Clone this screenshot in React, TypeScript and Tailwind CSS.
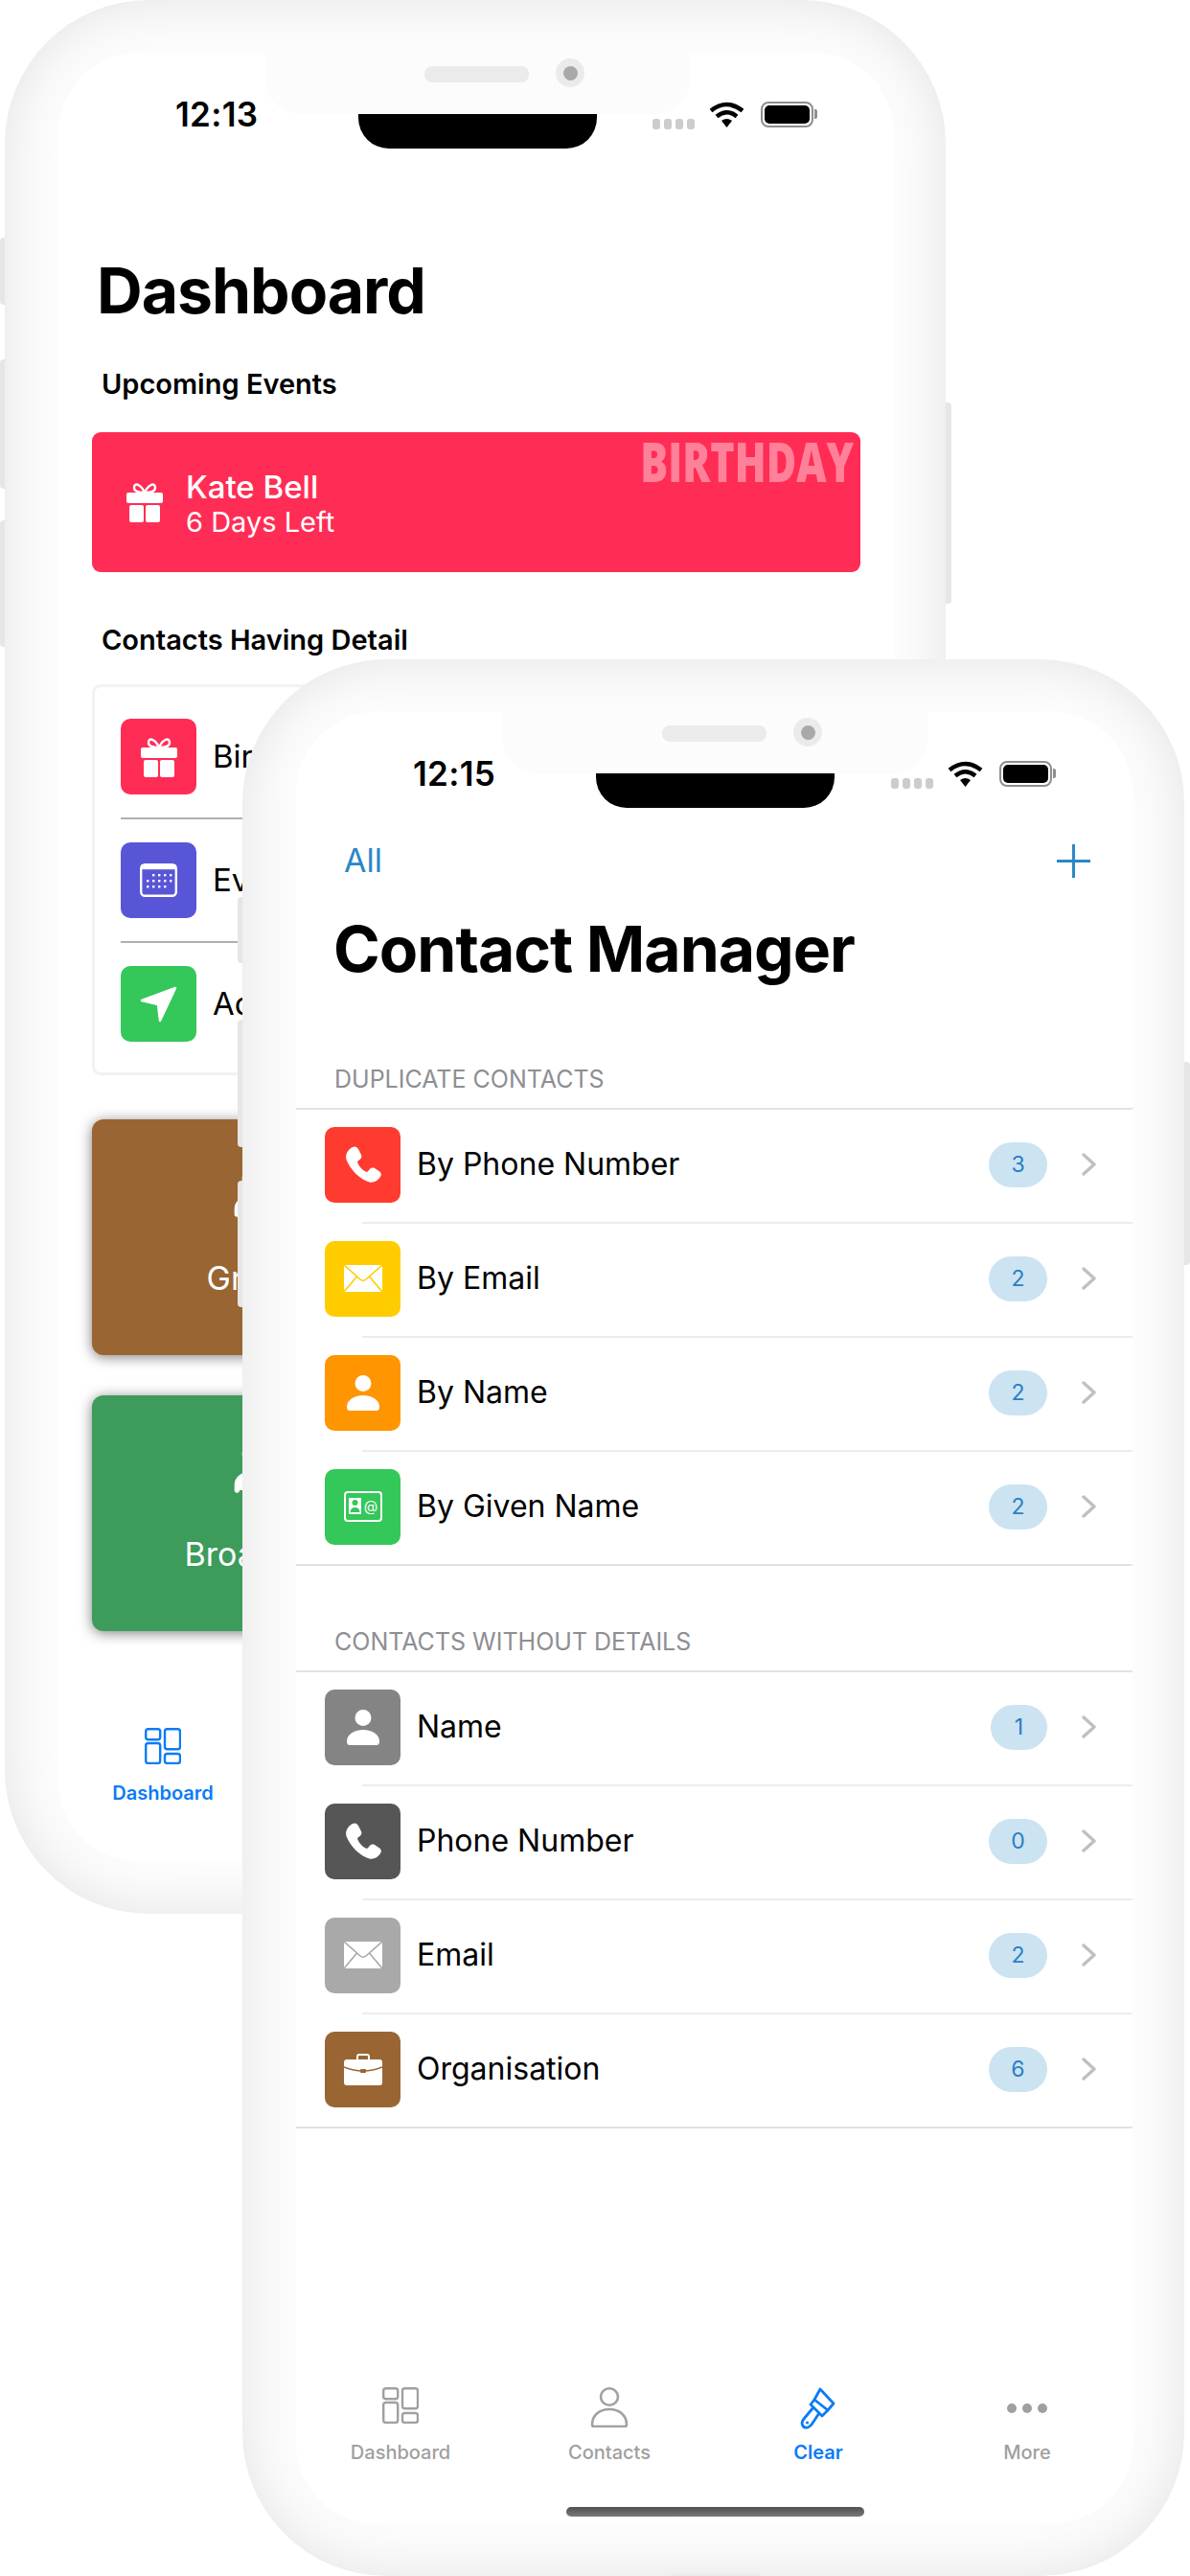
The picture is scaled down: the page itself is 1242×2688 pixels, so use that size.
import { ReactNode } from "react";
import { Users } from "lucide-react";

const PhoneGlyph = () => (
  <svg width="38" height="38" viewBox="0 0 38 38" fill="white">
    <path d="M8 1 C11 -0.5 13 1 14.5 4 L17 9 C18 11.5 17 13 15 14.5 L13.5 15.5 C13 16 13 17 13.5 18 C15.5 22 18 24.5 21.5 26.5 C22.5 27 23.5 27 24 26.3 L25.5 24.5 C27 22.5 29 22 31 23 L35.5 26 C38 27.5 38.5 30 37 32 C34.5 36 30 38.5 25.5 37.5 C17 35.5 5.5 25 1.5 14 C0 9 3 3.5 8 1Z" />
  </svg>
);

const PersonIcon = () => (
  <svg width="34" height="37" viewBox="0 0 34 37" fill="white">
    <circle cx="17" cy="8.5" r="8.5" />
    <path d="M0 33 C0 25 9 21 17 21 C25 21 34 25 34 33 Q34 37 31 37 H3 Q0 37 0 33Z" />
  </svg>
);

const MailIcon = ({ line }: { line: string }) => (
  <svg width="40" height="28" viewBox="0 0 40 28">
    <rect width="40" height="28" rx="1.5" fill="white" />
    <path d="M0 0 L17 15 Q20 17.5 23 15 L40 0 M0 28 L13.5 12 M40 28 L26.5 12" fill="none" stroke={line} strokeWidth="1.6" />
  </svg>
);

const CardIcon = () => (
  <svg width="40" height="32" viewBox="0 0 40 32">
    <rect x="1" y="1" width="38" height="30" rx="3" fill="none" stroke="white" strokeWidth="2" />
    <rect x="5" y="7" width="13" height="17" fill="white" />
    <circle cx="11.5" cy="12" r="3" fill="#34C759" />
    <path d="M6.5 22 Q7 17 11.5 17 Q16 17 16.5 22Z" fill="#34C759" />
    <text x="28" y="21" textAnchor="middle" fontSize="15" fill="white" fontFamily="Inter, sans-serif">@</text>
  </svg>
);

const BriefcaseIcon = () => (
  <svg width="40" height="33" viewBox="0 0 40 33">
    <path d="M14 7 V3 Q14 1 16 1 H24 Q26 1 26 3 V7" fill="none" stroke="white" strokeWidth="2" />
    <path d="M3 6 H37 Q40 6 40 9 V30 Q40 33 37 33 H3 Q0 33 0 30 V9 Q0 6 3 6Z" fill="white" />
    <path d="M0 14 Q20 22 40 14" fill="none" stroke="#996633" strokeWidth="1.5" />
    <rect x="17" y="16" width="6" height="4" rx="1" fill="#996633" />
  </svg>
);

const GiftIcon = () => (
  <svg width="38" height="42" viewBox="0 0 38 42" fill="white">
    <path d="M19 11 C15 2 8 0 8 6 C8 10 13 11 19 11 C25 11 30 10 30 6 C30 0 23 2 19 11Z" fill="none" stroke="white" strokeWidth="2.4" />
    <rect y="11" width="38" height="11" rx="2" />
    <rect x="3" y="24" width="15" height="18" rx="2" />
    <rect x="20" y="24" width="15" height="18" rx="2" />
  </svg>
);

const CalendarIcon = () => (
  <svg width="39" height="35" viewBox="0 0 39 35">
    <rect x="1.2" y="1.2" width="36.6" height="32.6" rx="4" fill="none" stroke="white" strokeWidth="2.4" />
    <rect x="1.2" y="1.2" width="36.6" height="5" fill="white" />
    {[11, 17, 23].map((y) =>
      [8, 14, 20, 26, 32].map((x) => <rect key={`${x}-${y}`} x={x - 1} y={y} width="2.4" height="2.4" fill="white" opacity={(y === 11 && x < 14) || (y === 23 && x > 26) ? 0 : 1} />)
    )}
  </svg>
);

const ArrowIcon = () => (
  <svg width="39" height="38" viewBox="0 0 39 38">
    <path d="M37 2 L2 15 L19 19 L21 36Z" fill="white" stroke="white" strokeWidth="2.5" strokeLinejoin="round" />
  </svg>
);

const WifiIcon = () => (
  <svg width="37" height="27" viewBox="0 0 37 27" fill="none" stroke="black" strokeWidth="4.5">
    <path d="M2 9.5 Q18.5 -3.5 35 9.5" />
    <path d="M8 15.5 Q18.5 7 29 15.5" />
    <path d="M13 20 Q18.5 16 24 20 L18.5 27Z" fill="black" stroke="none" />
  </svg>
);

const DashboardIcon = ({ color }: { color: string }) => (
  <svg width="38" height="38" viewBox="0 0 38 38" fill="none" stroke={color} strokeWidth="2.4">
    <rect x="1.2" y="1.2" width="15" height="11" rx="2.5" />
    <rect x="21" y="1.2" width="16" height="21" rx="2.5" />
    <rect x="1.2" y="16" width="15" height="21" rx="2.5" />
    <rect x="21" y="27" width="16" height="10" rx="2.5" />
  </svg>
);

const ContactsIcon = () => (
  <svg width="40" height="42" viewBox="0 0 40 42" fill="none" stroke="#a0a0a0" strokeWidth="2.6">
    <ellipse cx="20" cy="10" rx="9" ry="8.7" />
    <path d="M2 39 C2 29 10 23 20 23 C30 23 38 29 38 39 Q38 41 36 41 H4 Q2 41 2 39Z" />
  </svg>
);

const BrushIcon = ({ color }: { color: string }) => (
  <svg width="40" height="44" viewBox="0 0 40 44" fill="none" stroke={color} strokeWidth="2.8" strokeLinejoin="round">
    <path d="M22 2 L36 17 L30 24 L16 13Z" />
    <path d="M16 13 L12 18 L24 30 L30 24" />
    <path d="M15 21 L5 33 C1 38 4 43 9 42 C11 41.5 12 40 13 39 L21 27" />
    <circle cx="8.5" cy="37" r="1.6" fill={color} stroke="none" />
  </svg>
);

const StatusBar = ({ time }: { time: string }) => (
  <div className="relative flex h-[100px] shrink-0 items-center justify-between pl-[122px] pr-[80px] pt-[28px]">
    <span className="text-[35px] font-semibold leading-none tracking-[0.3px] text-black">{time}</span>
    <div className="flex items-center">
      <div className="mr-[15px] mt-[20px] flex gap-[4px]">
        {[0, 1, 2, 3].map((i) => (
          <div key={i} className="h-[11px] w-[8px] rounded-[3px] bg-[#cccccc]" />
        ))}
      </div>
      <WifiIcon />
      <div className="ml-[17px] flex items-center">
        <div className="h-[27px] w-[55px] rounded-[8px] border-2 border-[#8e8e8e] p-[2px]">
          <div className="h-full w-full rounded-[5px] bg-black" />
        </div>
        <div className="ml-[1px] h-[10px] w-[3px] rounded-r-[2px] bg-[#8e8e8e]" />
      </div>
    </div>
    <div className="absolute left-[313px] top-[64px] h-[36px] w-[249px] rounded-b-[32px] bg-black" />
    <div className="absolute left-[216px] top-0 flex h-[64px] w-[443px] items-start gap-[28px] rounded-b-[36px] bg-[#fcfcfc] pl-[166px] pt-[6px]">
      <div className="mt-[8px] h-[17px] w-[109px] rounded-[8px] bg-[#ebebeb]" />
      <div className="flex h-[30px] w-[30px] items-center justify-center rounded-full bg-[#ebebeb]">
        <div className="h-[15px] w-[15px] rounded-full bg-[#a9a9a9]" />
      </div>
    </div>
  </div>
);

const TabBar = ({ active, className }: { active: string; className: string }) => {
  const tabs: { label: string; icon: (color: string) => ReactNode }[] = [
    { label: "Dashboard", icon: (c) => <DashboardIcon color={c} /> },
    { label: "Contacts", icon: () => <ContactsIcon /> },
    { label: "Clear", icon: (c) => <BrushIcon color={c} /> },
    {
      label: "More",
      icon: () => (
        <div className="flex h-[44px] items-center gap-[6px]">
          {[0, 1, 2].map((i) => (
            <div key={i} className="h-[10px] w-[10px] rounded-full bg-[#a0a0a0]" />
          ))}
        </div>
      ),
    },
  ];
  return (
    <div className={`mt-auto flex ${className}`}>
      {tabs.map((tab) => {
        const on = tab.label === active;
        return (
          <div key={tab.label} className="flex w-[218px] shrink-0 flex-col items-center">
            <div className="flex h-[44px] items-start justify-center">{tab.icon(on ? "#0a7cf5" : "#a0a0a0")}</div>
            <span className={`mt-[11px] text-[20px] leading-[26px] ${on ? "font-semibold text-[#0a7cf5]" : "font-medium text-[#9f9f9f]"}`}>{tab.label}</span>
          </div>
        );
      })}
    </div>
  );
};

const Phone = ({ children, className }: { children: ReactNode; className: string }) => (
  <div className={`absolute ${className}`}>
    <div className="relative h-full w-full rounded-[150px] bg-[#fcfcfc] py-[55px] pl-[56px] pr-[54px] shadow-[inset_0_0_56px_rgba(0,0,0,0.1)]">
      <div className="relative flex h-full flex-col overflow-hidden rounded-[84px] bg-white">{children}</div>
      <div className="absolute bottom-0 left-[447px] h-[3px] w-[93px] bg-[#ececec]" />
    </div>
  </div>
);

const SideButton = ({ className }: { className: string }) => <div className={`absolute w-[6px] bg-[#e6e6e6] ${className}`} />;

const DetailRow = ({ color, icon, label }: { color: string; icon: ReactNode; label: string }) => (
  <div className="flex items-center gap-[17px]">
    <div className={`flex h-[79px] w-[79px] items-center justify-center rounded-[10px] ${color}`}>{icon}</div>
    <span className="text-[33px] text-black">{label}</span>
  </div>
);

const Tile = ({ color, label }: { color: string; label: string }) => (
  <div className={`flex h-[246px] w-[356px] flex-col items-center gap-[39px] rounded-[12px] pt-[43px] text-white shadow-[0_2px_14px_rgba(0,0,0,0.5)] ${color}`}>
    <Users size={64} fill="white" />
    <span className="text-[34px] leading-[40px]">{label}</span>
  </div>
);

const Dashboard = () => (
  <>
    <StatusBar time="12:13" />
    <div className="flex flex-1 flex-col pl-[35px] pr-[35px]">
      <h1 className="mt-[108px] pl-[5px] text-[66px] font-bold leading-[80px] tracking-[-1px] text-black">Dashboard</h1>
      <h2 className="mt-[38px] pl-[10px] text-[29px] font-semibold leading-[40px] text-black">Upcoming Events</h2>
      <div className="relative mt-[30px] flex h-[146px] items-center gap-[24px] rounded-[9px] bg-[#ff2d55] pl-[36px]">
        <GiftIcon />
        <div className="flex flex-col pt-[3px] text-white">
          <span className="text-[33px] font-medium leading-[38px]">Kate Bell</span>
          <span className="text-[29px] leading-[36px]">6 Days Left</span>
        </div>
        <span className="absolute right-[7px] top-[8px] origin-top-right scale-y-[1.3] font-['Open_Sans',sans-serif] text-[43px] font-extrabold leading-[36px] text-white/40">BIRTHDAY</span>
      </div>
      <h2 className="mt-[51px] pl-[10px] text-[29px] font-semibold leading-[40px] text-black">Contacts Having Detail</h2>
      <div className="mt-[26px] flex h-[408px] flex-col gap-[25px] rounded-[9px] border-[3px] border-[#f2f2f2] pl-[27px] pt-[33px]">
        <DetailRow color="bg-[#ff2d55]" icon={<GiftIcon />} label="Birthday" />
        <div className="-my-[1px] h-[2px] bg-[#b0b0b0]" />
        <DetailRow color="bg-[#5856d6]" icon={<CalendarIcon />} label="Events" />
        <div className="-my-[1px] h-[2px] bg-[#b0b0b0]" />
        <DetailRow color="bg-[#34c759]" icon={<ArrowIcon />} label="Address" />
      </div>
      <div className="mt-[46px] flex flex-col gap-[42px]">
        <Tile color="bg-[#996633]" label="Groups" />
        <Tile color="bg-[#3d9b5b]" label="Broadcast" />
      </div>
    </div>
    <TabBar active="Dashboard" className="pb-[58px]" />
  </>
);

const duplicates = [
  { color: "bg-[#ff3b30]", icon: <PhoneGlyph />, label: "By Phone Number", count: 3 },
  { color: "bg-[#ffcc00]", icon: <MailIcon line="#ffcc00" />, label: "By Email", count: 2 },
  { color: "bg-[#ff9500]", icon: <PersonIcon />, label: "By Name", count: 2 },
  { color: "bg-[#34c759]", icon: <CardIcon />, label: "By Given Name", count: 2 },
];

const missing = [
  { color: "bg-[#848484]", icon: <PersonIcon />, label: "Name", count: 1 },
  { color: "bg-[#565656]", icon: <PhoneGlyph />, label: "Phone Number", count: 0 },
  { color: "bg-[#a9a9a9]", icon: <MailIcon line="#a9a9a9" />, label: "Email", count: 2 },
  { color: "bg-[#996633]", icon: <BriefcaseIcon />, label: "Organisation", count: 6 },
];

const Section = ({ title, rows, className }: { title: string; rows: typeof duplicates; className: string }) => (
  <section className={className}>
    <h3 className="pl-[40px] text-[25px] leading-[32px] text-[#8e8e93]">{title}</h3>
    <div className="mt-[14px] border-y-2 border-[#e2e2e4]">
      {rows.map((row, i) => (
        <div key={row.label}>
          {i > 0 && <div className="ml-[69px] h-[2px] bg-[#ececee]" />}
          <div className="flex h-[117px] items-center pb-[3px] pl-[30px] pr-[38px]">
            <div className={`flex h-[79px] w-[79px] items-center justify-center rounded-[10px] ${row.color}`}>{row.icon}</div>
            <span className="ml-[17px] flex-1 text-[32px] text-black">{row.label}</span>
            <span className={`flex h-[47px] items-center justify-center rounded-full bg-[#cce3f2] text-[23px] text-[#2a7fc4] ${row.count === 1 ? "w-[59px]" : "w-[61px]"}`}>{row.count}</span>
            <svg className="ml-[36px]" width="15" height="24" viewBox="0 0 15 24" fill="none" stroke="#c0c0c0" strokeWidth="3.4" strokeLinecap="round" strokeLinejoin="round">
              <path d="M2 2 L13 12 L2 22" />
            </svg>
          </div>
        </div>
      ))}
    </div>
  </section>
);

const ContactManager = () => (
  <>
    <StatusBar time="12:15" />
    <div className="mt-[35px] flex items-center justify-between pl-[50px] pr-[44px]">
      <span className="text-[34px] leading-[40px] text-[#2a87c8]">All</span>
      <svg width="35" height="35" viewBox="0 0 35 35" stroke="#2a87c8" strokeWidth="3">
        <path d="M17.5 0 V35 M0 17.5 H35" />
      </svg>
    </div>
    <h1 className="mt-[32px] pl-[39px] text-[66px] font-bold leading-[80px] tracking-[-1px] text-black">Contact Manager</h1>
    <Section title="DUPLICATE CONTACTS" rows={duplicates} className="mt-[80px]" />
    <Section title="CONTACTS WITHOUT DETAILS" rows={missing} className="mt-[63px]" />
    <TabBar active="Clear" className="pb-[61px]" />
    <div className="absolute bottom-[7px] left-[282px] h-[10px] w-[311px] rounded-full bg-gradient-to-b from-[#505050] to-[#7a7a7a]" />
  </>
);

export default function App() {
  return (
    <div className="relative h-[2688px] w-[1242px] overflow-hidden bg-white font-['Inter',sans-serif]">
      <SideButton className="left-0 top-[248px] h-[70px] rounded-l-[4px]" />
      <SideButton className="left-0 top-[375px] h-[135px] rounded-l-[4px]" />
      <SideButton className="left-0 top-[543px] h-[132px] rounded-l-[4px]" />
      <SideButton className="left-[987px] top-[420px] h-[210px] rounded-r-[4px]" />
      <Phone className="left-[5px] top-0 h-[1997px] w-[982px]">
        <Dashboard />
      </Phone>
      <SideButton className="left-[248px] top-[936px] h-[69px] rounded-l-[4px]" />
      <SideButton className="left-[248px] top-[1064px] h-[133px] rounded-l-[4px]" />
      <SideButton className="left-[248px] top-[1232px] h-[132px] rounded-l-[4px]" />
      <SideButton className="left-[1236px] top-[1108px] h-[212px] rounded-r-[4px]" />
      <Phone className="left-[253px] top-[688px] h-[2000px] w-[983px]">
        <ContactManager />
      </Phone>
    </div>
  );
}
